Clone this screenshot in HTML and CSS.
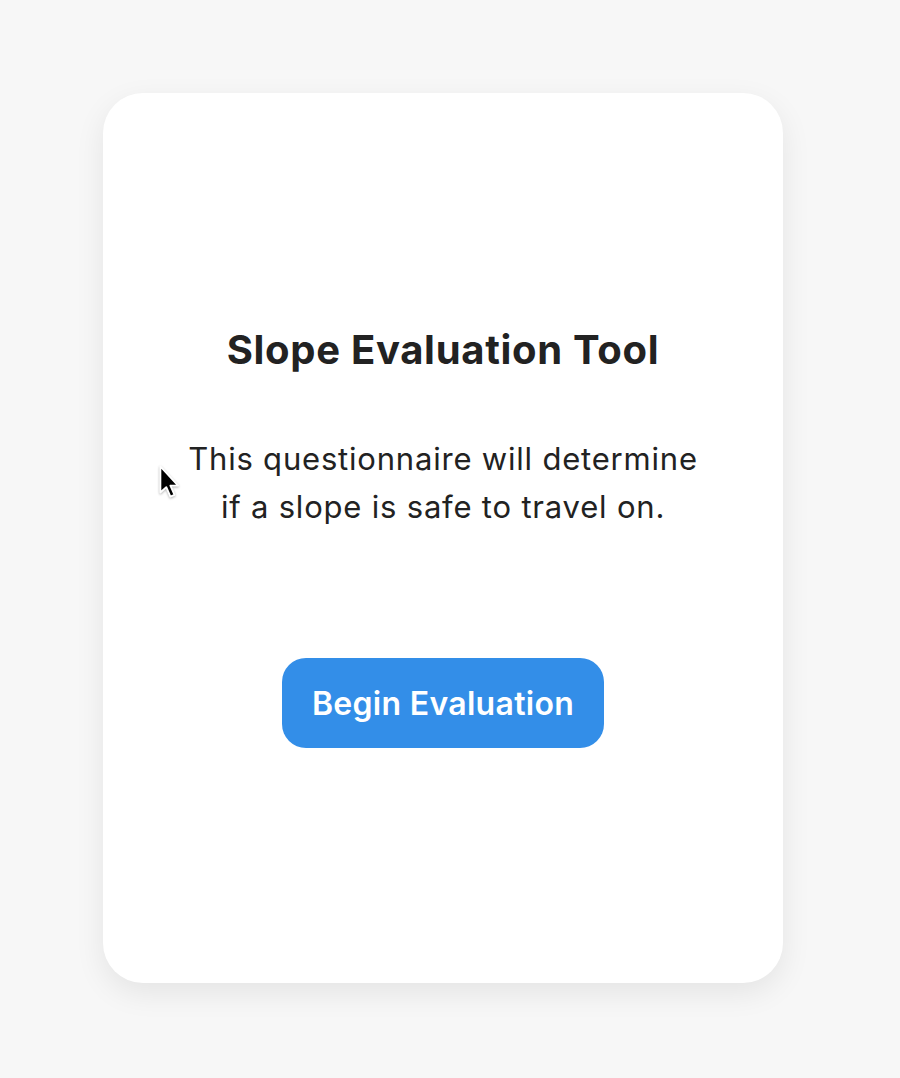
FILE: index.html
```html
<!DOCTYPE html>
<html lang="en">
<head>
  <meta charset="UTF-8">
  <meta name="viewport" content="width=device-width, initial-scale=1.0">
  <title>Slope Evaluation Tool</title>
  <link rel="stylesheet" href="styles.css">
</head>
<body>
  <main class="card">
    <h1>Slope Evaluation Tool</h1>
    <p class="intro">This questionnaire will determine if a slope is safe to travel on.</p>
    <button class="begin-btn">Begin Evaluation</button>
  </main>

  <svg class="cursor" width="26" height="36" viewBox="0 0 22 30">
    <path d="M2 1 L2 23 L7 18.5 L10.5 26.5 L14 25 L10.5 17.2 L17 17.2 Z" fill="#000" stroke="#fff" stroke-width="1.6" stroke-linejoin="round"/>
  </svg>
</body>
</html>
```

FILE: styles.css
```css
* {
  margin: 0;
  padding: 0;
  box-sizing: border-box;
  font-family: Inter, "Noto Sans", sans-serif;
}

body {
  min-height: 100vh;
  background-color: #f7f7f7;
  padding: 93px 0 0 103px;
}

.card {
  width: 680px;
  height: 890px;
  background: #fff;
  border-radius: 40px;
  box-shadow: 0 10px 30px rgba(0, 0, 0, 0.08);
  display: flex;
  flex-direction: column;
  align-items: center;
  padding-top: 235px;
  color: #222;
}

.card h1 {
  font-size: 40px;
  line-height: 44px;
  font-weight: 700;
  letter-spacing: 0.7px;
}

.intro {
  margin-top: 63px;
  max-width: 530px;
  font-size: 31px;
  line-height: 48px;
  letter-spacing: 0.8px;
  text-align: center;
}

.begin-btn {
  margin-top: 127px;
  width: 322px;
  height: 90px;
  border: none;
  border-radius: 24px;
  background-color: #338ee8;
  color: #fff;
  font-size: 32px;
  font-weight: 600;
  letter-spacing: 0.3px;
  cursor: pointer;
}

.cursor {
  position: absolute;
  left: 158px;
  top: 465px;
  filter: drop-shadow(0 1px 1px rgba(0, 0, 0, 0.3));
}
```
